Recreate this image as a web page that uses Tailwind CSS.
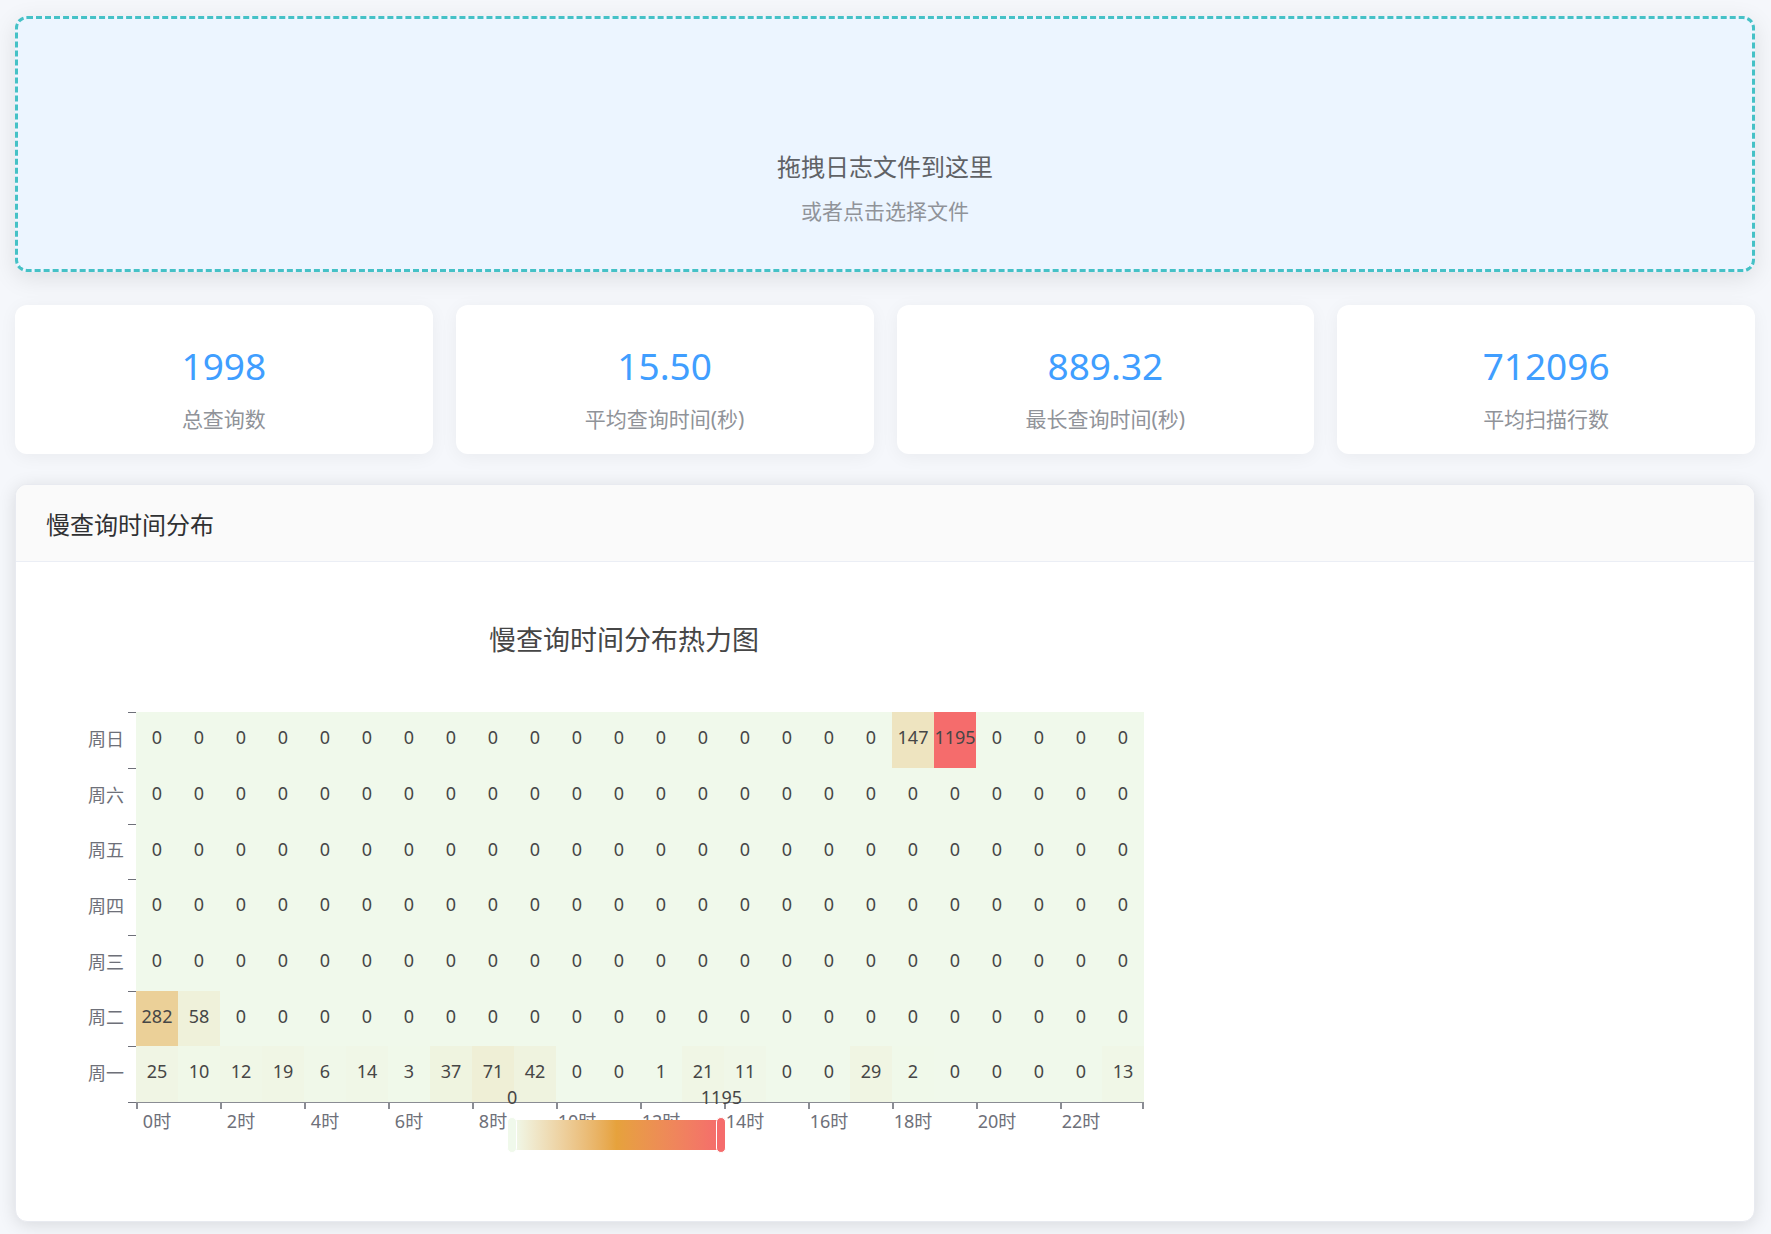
<!DOCTYPE html>
<html lang="zh-CN">
<head>
<meta charset="utf-8">
<meta name="viewport" content="width=device-width, initial-scale=1">
<title>慢查询日志分析</title>
<script src="https://cdn.jsdelivr.net/npm/@tailwindcss/browser@4"></script>
</head>
<body class="min-h-screen bg-[#f5f7fb] pt-4 pr-4 pb-3 pl-[15px] font-['Noto_Sans','Noto_Sans_CJK_SC',sans-serif]">
<main>
  <label class="flex h-64 cursor-pointer flex-col items-center justify-end gap-3 rounded-xl border-3 border-dashed border-[#45c1c6] bg-[#ecf5ff] pb-[42px] shadow-[0_6px_24px_rgba(0,0,0,0.1)]">
    <span class="text-2xl leading-8 text-[#606266]">拖拽日志文件到这里</span>
    <span class="text-[21px] leading-8 text-[#909399]">或者点击选择文件</span>
    <input type="file" class="sr-only">
  </label>

  <section class="mt-[33px] grid grid-cols-4 gap-[23px] text-center">
    <div class="h-[149px] rounded-xl bg-white pt-9 shadow-[0_3px_18px_rgba(0,0,0,0.05)]">
      <p class="text-[37px] leading-[50px] text-[#409eff]">1998</p>
      <p class="mt-3 text-[21px] leading-8 text-[#909399]">总查询数</p>
    </div>
    <div class="h-[149px] rounded-xl bg-white pt-9 shadow-[0_3px_18px_rgba(0,0,0,0.05)]">
      <p class="text-[37px] leading-[50px] text-[#409eff]">15.50</p>
      <p class="mt-3 text-[21px] leading-8 text-[#909399]">平均查询时间(秒)</p>
    </div>
    <div class="h-[149px] rounded-xl bg-white pt-9 shadow-[0_3px_18px_rgba(0,0,0,0.05)]">
      <p class="text-[37px] leading-[50px] text-[#409eff]">889.32</p>
      <p class="mt-3 text-[21px] leading-8 text-[#909399]">最长查询时间(秒)</p>
    </div>
    <div class="h-[149px] rounded-xl bg-white pt-9 shadow-[0_3px_18px_rgba(0,0,0,0.05)]">
      <p class="text-[37px] leading-[50px] text-[#409eff]">712096</p>
      <p class="mt-3 text-[21px] leading-8 text-[#909399]">平均扫描行数</p>
    </div>
  </section>

  <section class="mt-[30px] overflow-hidden rounded-xl border border-[#e8eaf0] bg-white shadow-[0_3px_18px_rgba(0,0,0,0.12)]">
    <h2 class="border-b border-[#ebeef5] bg-[#fafafa] px-[30px] pt-6 pb-5 text-2xl leading-8 text-[#303133]">慢查询时间分布</h2>
    <div class="px-[60px] pt-[58px] pb-[88px]">
      <div class="relative w-full max-w-[1068px]">
        <h3 class="pl-7 text-center text-[27px] leading-10 text-[#464646]">慢查询时间分布热力图</h3>
        <table class="mt-[52px] w-full table-fixed border-separate border-spacing-0 text-center text-lg leading-6 text-[#464646]">
          <colgroup id="cols"><col class="w-[52px]"><col class="w-2"></colgroup>
          <tbody id="heat"></tbody>
          <tfoot id="axis" class="text-[#6e7079]"></tfoot>
        </table>
        <div class="absolute -bottom-5 left-[431px] flex w-[219px] flex-col text-lg leading-6 text-[#464646]">
          <div class="flex justify-between"><span class="w-[9px] text-center">0</span><span class="-mr-4">1195</span></div>
          <div class="mt-2 flex h-9 items-center">
            <span class="z-10 h-full w-[10px] rounded-full border border-white bg-[#f0f9eb]"></span>
            <span class="-mx-1 h-[30px] grow bg-linear-to-r from-[#f0f9eb] via-[#e6a23c] to-[#f56c6c]"></span>
            <span class="z-10 h-full w-[10px] rounded-full border border-white bg-[#f56c6c]"></span>
          </div>
        </div>
      </div>
    </div>
  </section>
</main>
<script>
  const zeros = () => Array(24).fill(0);
  const sunday = zeros(); sunday[18] = 147; sunday[19] = 1195;
  const tuesday = zeros(); tuesday[0] = 282; tuesday[1] = 58;
  const monday = [25,10,12,19,6,14,3,37,71,42,0,0,1,21,11,0,0,29,2,0,0,0,0,13];
  const rows = [['周日', sunday], ['周六', zeros()], ['周五', zeros()], ['周四', zeros()], ['周三', zeros()], ['周二', tuesday], ['周一', monday]];
  const stops = [[240,249,235], [230,162,60], [245,108,108]];
  // Piecewise linear colour scale over 0..1195
  const colour = v => {
    const t = v / 1195 * 2, i = Math.min(1, Math.floor(t)), f = t - i;
    return 'rgb(' + stops[i].map((c, k) => Math.round(c + (stops[i + 1][k] - c) * f)).join(',') + ')';
  };
  document.getElementById('cols').insertAdjacentHTML('beforeend', '<col>'.repeat(24));
  document.getElementById('heat').innerHTML = rows.map(([day, values]) =>
    `<tr class="h-14 nth-[3n]:h-[55px]"><th scope="row" class="p-0 pr-1 pb-[3px] text-right font-normal text-[#6e7079]">${day}</th><td class="border-t border-[#6e7079] p-0"></td>` +
    values.map(v => `<td class="p-0 pb-[6px]" style="background:${colour(v)}"><span class="flex justify-center">${v}</span></td>`).join('') + '</tr>').join('');
  const hours = [...Array(24).keys()];
  document.getElementById('axis').innerHTML =
    '<tr class="h-[7px]"><td class="p-0"></td><td class="border-t border-[#6e7079] p-0"></td>' +
    '<td colspan="2" class="border-t border-l-2 border-[#8a8c93] p-0 last:border-r-2"></td>'.repeat(12) + '</tr>' +
    '<tr><td></td><td></td>' + hours.map(h => `<th class="p-0 font-normal whitespace-nowrap">${h % 2 ? '' : h + '时'}</th>`).join('') + '</tr>';
</script>
</body>
</html>
